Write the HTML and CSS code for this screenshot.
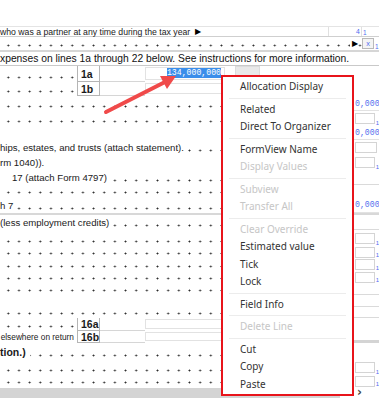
FILE: index.html
```html
<!DOCTYPE html>
<html lang="en">
<head>
    <meta charset="UTF-8">
    <meta name="viewport" content="width=device-width, initial-scale=1.0">
    <title>Form View</title>
    <link rel="stylesheet" href="styles.css">
</head>
<body>
    <div class="screen">
        <div class="form">
            <div class="row row-a">
                <span class="txt">who was a partner at any time during the tax year</span>
                <span class="tri">&#9654;</span>
                <span class="fill"></span>
                <span class="field field-4">4</span>
                <span class="ref">1</span>
            </div>
            <div class="row row-b leader">
                <span class="fill"></span>
                <span class="tri tri-b">&#9654;</span>
                <span class="field field-x">x</span>
                <span class="ref ref-low">1</span>
            </div>
            <div class="row row-c">
                <span class="txt">xpenses on lines 1a through 22 below. See instructions for more information.</span>
            </div>

            <!-- line 1a / 1b -->
            <div class="row leader h16">
                <span class="lead"></span>
                <span class="num">1a</span>
                <span class="cell"></span>
                <span class="input"><span class="sel">134,000,000</span></span>
                <span class="caret"><svg width="5" height="3" viewBox="0 0 5 3"><path d="M0.5 0.5 L2.5 2.5 L4.5 0.5" fill="none" stroke="#666" stroke-width="1"/></svg></span>
                <span class="gray"></span>
                <span class="fill white"></span>
            </div>
            <div class="row leader h14">
                <span class="lead"></span>
                <span class="num">1b</span>
                <span class="cell"></span>
                <span class="input"></span>
                <span class="fill white"></span>
            </div>

            <div class="row leader h15"><span class="fill"></span><span class="amt val">0,000</span></div>
            <div class="row leader h15"><span class="fill"></span><span class="amt box"><i></i><b>1</b></span></div>
            <div class="row h14"><span class="fill"></span><span class="amt val">0,000</span></div>
            <div class="row leader h15"><span class="txt">hips, estates, and trusts (attach statement).</span><span class="fill"></span><span class="amt box"><i></i></span></div>
            <div class="row h15"><span class="txt">rm 1040)).</span><span class="fill"></span><span class="amt box"><i></i><b>1</b></span></div>
            <div class="row leader h15"><span class="txt indent">17 (attach Form 4797)</span><span class="fill"></span><span class="amt rule"></span></div>
            <div class="row leader h12"><span class="fill"></span><span class="amt"></span></div>
            <div class="row leader h16 sep"><span class="txt">h 7</span><span class="fill"></span><span class="amt val">0,000</span></div>
            <div class="row leader h15"><span class="txt">(less employment credits)</span><span class="fill"></span><span class="amt rule"></span></div>
            <div class="row leader h16"><span class="fill"></span><span class="amt box"><i></i><b>1</b></span></div>
            <div class="row leader h12"><span class="fill"></span><span class="amt box"><i></i><b>1</b></span></div>
            <div class="row leader h13"><span class="fill"></span><span class="amt box"><i></i><b>1</b></span></div>
            <div class="row leader h12"><span class="fill"></span><span class="amt box"><i></i><b>1</b></span></div>
            <div class="row leader h12"><span class="fill"></span><span class="amt rule"></span></div>
            <div class="row h12"><span class="fill"></span><span class="amt rule"></span></div>
            <div class="row leader h11"><span class="fill"></span><span class="amt rule"></span></div>

            <!-- line 16a / 16b -->
            <div class="row leader h13">
                <span class="lead"></span>
                <span class="num">16a</span>
                <span class="cell"></span>
                <span class="input"></span>
                <span class="fill white"></span>
                <span class="amt"></span>
            </div>
            <div class="row h12">
                <span class="lead small">elsewhere on return</span>
                <span class="num">16b</span>
                <span class="cell"></span>
                <span class="input"></span>
                <span class="fill white"></span>
                <span class="amt rule-thick"></span>
            </div>
            <div class="row leader h17"><span class="txt bold">tion.)</span><span class="fill"></span><span class="amt"></span></div>
            <div class="row leader h15"><span class="fill"></span><span class="amt box"><i></i><b>1</b></span></div>
            <div class="row leader h12"><span class="fill"></span><span class="amt box"><i></i><b>1</b></span></div>

            <div class="hscroll">
                <span class="thumb"></span>
                <span class="arrow">&#8250;</span>
            </div>
        </div>

        <svg class="pointer" width="379" height="400" viewBox="0 0 379 400">
            <line x1="106" y1="112" x2="165" y2="82" stroke="#f04a4a" stroke-width="4" stroke-linecap="round"/>
            <polygon points="176,76 167,89 160,76" fill="#f04a4a"/>
        </svg>

        <div class="menu">
            <div class="item">Allocation Display</div>
            <div class="divider"></div>
            <div class="item">Related</div>
            <div class="item">Direct To Organizer</div>
            <div class="divider"></div>
            <div class="item">FormView Name</div>
            <div class="item disabled">Display Values</div>
            <div class="divider"></div>
            <div class="item disabled">Subview</div>
            <div class="item disabled">Transfer All</div>
            <div class="divider"></div>
            <div class="item disabled">Clear Override</div>
            <div class="item">Estimated value</div>
            <div class="item">Tick</div>
            <div class="item">Lock</div>
            <div class="divider"></div>
            <div class="item">Field Info</div>
            <div class="divider"></div>
            <div class="item disabled">Delete Line</div>
            <div class="divider"></div>
            <div class="item">Cut</div>
            <div class="item">Copy</div>
            <div class="item">Paste</div>
        </div>
    </div>
</body>
</html>
```

FILE: styles.css
```css
body {
    margin: 0;
    background: #fff;
    font-family: "Liberation Sans", Arial, sans-serif;
    color: #1a1a1a;
}

.screen {
    position: relative;
    width: 379px;
    height: 400px;
    overflow: hidden;
}

.form {
    padding-top: 26px;
}

.row {
    display: flex;
    align-items: center;
    width: 379px;
    font-size: 9.6px;
    white-space: nowrap;
    box-sizing: border-box;
}

.h11 { height: 11px; }
.h12 { height: 12px; }
.h13 { height: 13px; }
.h14 { height: 14px; }
.h15 { height: 15px; }
.h16 { height: 16px; }
.h17 { height: 17px; }

.leader {
    background-image: radial-gradient(circle, #2a2a2a 0.8px, transparent 1.15px);
    background-size: 10.67px 3px;
    background-repeat: repeat-x;
    background-position: 3px calc(100% - 3px);
}

.txt {
    background: #fff;
    padding-right: 4px;
    align-self: stretch;
    display: flex;
    align-items: center;
}

.indent {
    padding-left: 12px;
}

.bold {
    font-weight: bold;
    font-size: 10.5px;
}

.fill {
    flex: 1;
    align-self: stretch;
}

.white {
    background: #fff;
}

.sep {
    border-bottom: 2px solid #d8d8d8;
    height: 18px;
}

/* top rows */
.row-a {
    height: 11px;
    border-top: 1px solid #e4e4e4;
    border-bottom: 1px solid #cfcfcf;
    font-size: 8.7px;
}

.tri {
    font-size: 8px;
    margin-left: 1px;
    color: #000;
}

.row-b {
    height: 15px;
    border-bottom: 2px solid #d6d6d6;
}

.tri-b {
    background: #fff;
    margin: 0 4px 0 0;
    padding-left: 2px;
}

.field {
    box-sizing: border-box;
    font-family: "Liberation Mono", monospace;
    font-size: 7px;
    color: #4f6df0;
    background: #fff;
    align-self: stretch;
    display: flex;
    align-items: center;
}

.field-4 {
    width: 34px;
    justify-content: flex-end;
    padding-right: 1px;
    border-left: 1px solid #e0e0e0;
    border-right: 1px solid #e0e0e0;
}

.field-x {
    width: 12px;
    justify-content: center;
    border: 1px solid #b9b9b9;
    background: #f4f4f4;
    margin: 1px 0;
}

.ref {
    width: 16px;
    font-size: 6.5px;
    color: #4f6df0;
    align-self: flex-end;
    padding-left: 1px;
}

.ref-low {
    width: 4px;
}

.row-c {
    height: 14px;
    border-bottom: 1px solid #c9c9c9;
    font-size: 10.3px;
    color: #111;
}

/* numbered lines */
.lead {
    width: 77px;
    flex: none;
    align-self: stretch;
}

.lead.small {
    background: #fff;
    font-size: 8.3px;
    display: flex;
    align-items: center;
    justify-content: flex-end;
    padding-right: 3px;
    box-sizing: border-box;
    color: #222;
}

.num {
    width: 23px;
    flex: none;
    align-self: stretch;
    box-sizing: border-box;
    border: 1px solid #b5b5b5;
    border-top: none;
    background: #fff;
    font-weight: bold;
    font-size: 10.5px;
    display: flex;
    align-items: center;
    padding-left: 3px;
}

.cell {
    width: 45px;
    flex: none;
    align-self: stretch;
    background: #fff;
    border-bottom: 1px solid #d6d6d6;
}

.input {
    width: 80px;
    flex: none;
    align-self: stretch;
    box-sizing: border-box;
    margin: 1px 0 2px;
    border: 1px solid #e2e2e2;
    background: #fff;
    display: flex;
    justify-content: flex-end;
    align-items: flex-start;
}

.sel {
    font-family: "Liberation Mono", monospace;
    font-size: 8.2px;
    line-height: 10px;
    background: #3b8eea;
    color: #fff;
    margin-right: 3px;
}

.caret {
    width: 10px;
    flex: none;
    align-self: stretch;
    background: #fff;
    display: flex;
    align-items: flex-end;
    padding-left: 1px;
    box-sizing: border-box;
}

.gray {
    width: 23px;
    flex: none;
    align-self: stretch;
    background: #e9e9e9;
    border: 1px solid #dcdcdc;
}

/* right column */
.amt {
    width: 25px;
    flex: none;
    align-self: stretch;
    background: #fff;
    box-sizing: border-box;
    position: relative;
}

.amt.val {
    font-family: "Liberation Mono", monospace;
    font-size: 8.2px;
    color: #5572ee;
    display: flex;
    align-items: center;
    padding-left: 1px;
    overflow: hidden;
    border-bottom: 1px solid #e2e2e2;
}

.amt.box {
    display: flex;
    align-items: center;
}

.amt.box i {
    width: 22px;
    height: 11px;
    margin-left: 1px;
    box-sizing: border-box;
    border: 1px solid #d4d4d4;
}

.amt.box b {
    font-weight: normal;
    font-size: 6px;
    color: #4f6df0;
    align-self: flex-end;
    margin-left: 1px;
}

.amt.rule {
    border-bottom: 1px solid #dadada;
}

.amt.rule-thick {
    border-bottom: 3px solid #d4d4d4;
}

.hscroll {
    display: flex;
    height: 10px;
    margin-top: 1px;
}

.thumb {
    width: 340px;
    background: #d4d4d4;
}

.arrow {
    flex: 1;
    text-align: center;
    font-family: "DejaVu Sans", sans-serif;
    font-size: 12px;
    line-height: 9px;
    color: #444;
    font-weight: bold;
}

.pointer {
    position: absolute;
    left: 0;
    top: 0;
}

/* context menu */
.menu {
    position: absolute;
    left: 221px;
    top: 75px;
    width: 133px;
    box-sizing: border-box;
    padding: 1px 0 1px;
    background: #fff;
    border: 2px solid #e8141b;
    font-family: "Noto Sans", sans-serif;
    font-size: 10px;
    color: #333;
}

.item {
    height: 17.5px;
    line-height: 17.5px;
    padding-left: 17px;
}

.item.disabled {
    color: #c6c6c6;
}

.divider {
    height: 1px;
    margin: 2px 6px;
    background: #ececec;
}
```
